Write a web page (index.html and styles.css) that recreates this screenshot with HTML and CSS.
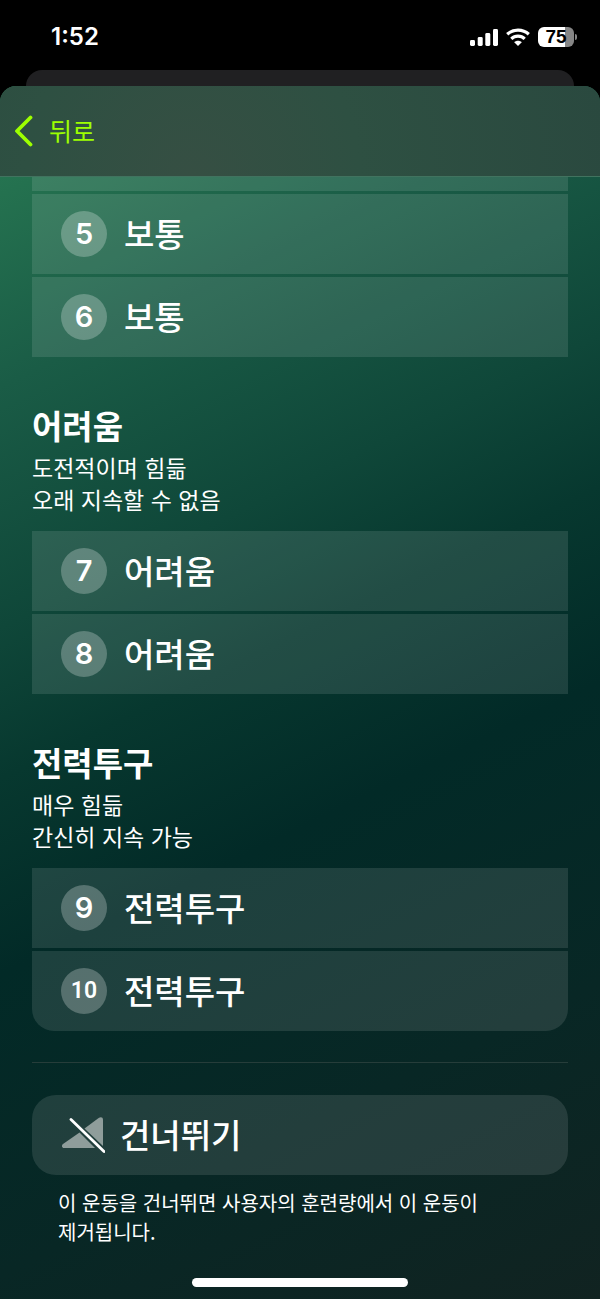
FILE: index.html
```
<!DOCTYPE html>
<html lang="ko">
<head>
  <meta charset="UTF-8">
  <meta name="viewport" content="width=device-width, initial-scale=1.0">
  <title>운동 강도</title>
  <link rel="stylesheet" href="styles.css">
</head>
<body>
  <div class="status-bar">
    <span class="time">1:52</span>
    <div class="status-icons">
      <svg class="signal" width="28" height="18" viewBox="0 0 28 18" fill="#fff">
        <rect x="0" y="12" width="5" height="6" rx="1.4"/>
        <rect x="7.7" y="9" width="5" height="9" rx="1.4"/>
        <rect x="15.3" y="5" width="5" height="13" rx="1.4"/>
        <rect x="23" y="1" width="5" height="17" rx="1.4"/>
      </svg>
      <svg class="wifi" width="24" height="18" viewBox="0 0 24 18" fill="none" stroke="#fff" stroke-width="3.2">
        <path d="M1.2 6.3C7.2.8 16.8.8 22.8 6.3"/>
        <path d="M5.3 10.8C9 7.2 15 7.2 18.7 10.8"/>
        <path d="M12 18l-3.8-3.8c2-2 5.6-2 7.6 0z" fill="#fff" stroke="none"/>
      </svg>
      <div class="battery">
        <span class="battery-level">75</span>
        <span class="battery-tip"></span>
      </div>
    </div>
  </div>

  <div class="card-behind"></div>

  <div class="sheet">
    <header class="nav">
      <button class="back">
        <svg width="20" height="32" viewBox="0 0 20 32" fill="none" stroke="#9dff00" stroke-width="3.8" stroke-linecap="round" stroke-linejoin="round">
          <path d="M16.5 2.5L3 16l13.5 13.5"/>
        </svg>
        <span class="label">뒤로</span>
      </button>
    </header>

    <main class="content">
      <div class="rows">
        <div class="row-peek"></div>
        <button class="row"><span class="badge">5</span><span class="label">보통</span></button>
        <button class="row"><span class="badge">6</span><span class="label">보통</span></button>
      </div>

      <section>
        <h2>어려움</h2>
        <p class="desc">도전적이며 힘듦<br>오래 지속할 수 없음</p>
        <div class="rows">
          <button class="row"><span class="badge">7</span><span class="label">어려움</span></button>
          <button class="row"><span class="badge">8</span><span class="label">어려움</span></button>
        </div>
      </section>

      <section>
        <h2>전력투구</h2>
        <p class="desc">매우 힘듦<br>간신히 지속 가능</p>
        <div class="rows">
          <button class="row"><span class="badge">9</span><span class="label">전력투구</span></button>
          <button class="row row-last"><span class="badge badge-small">10</span><span class="label">전력투구</span></button>
        </div>
      </section>

      <hr>

      <button class="row skip">
        <svg width="44" height="38" viewBox="0 0 44 38">
          <path d="M18.5 16.5L2 28C.3 29.3.7 32 3 32H34z" fill="#8f9d9b"/>
          <path d="M23.5 12.5L38 1.8C39.8.5 42 1.2 42 3.6V30z" fill="#8f9d9b"/>
          <path d="M10 3.5L43 35.5" stroke="#fff" stroke-width="2.8" stroke-linecap="round"/>
        </svg>
        <span class="label">건너뛰기</span>
      </button>
      <p class="note">이 운동을 건너뛰면 사용자의 훈련량에서 이 운동이 제거됩니다.</p>
    </main>

    <div class="home-indicator"></div>
  </div>
</body>
</html>
```
FILE: styles.css
```
* {
  margin: 0;
  padding: 0;
  box-sizing: border-box;
}
body {
  min-height: 100vh;
  display: flex;
  flex-direction: column;
  background: #000;
  color: #fff;
  font-family: "Noto Sans CJK KR", sans-serif;
}
button {
  border: none;
  background: none;
  color: inherit;
  font-family: inherit;
  cursor: pointer;
}

/* Status bar */
.status-bar {
  height: 70px;
  padding: 0 23px 0 51px;
  display: flex;
  align-items: flex-start;
  justify-content: space-between;
}
.time {
  margin-top: 22px;
  font-family: Inter, sans-serif;
  font-size: 24px;
  font-weight: 600;
  line-height: 30px;
}
.status-icons {
  margin-top: 27px;
  display: flex;
  align-items: center;
  gap: 8px;
}
.battery {
  display: flex;
  align-items: center;
  gap: 1px;
}
.battery-level {
  width: 36px;
  height: 20px;
  border-radius: 6px;
  background: linear-gradient(90deg, #fff 76%, #868686 76%);
  color: #000;
  font-family: "Liberation Sans", sans-serif;
  font-size: 19px;
  font-weight: 700;
  line-height: 20px;
  text-align: center;
}
.battery-tip {
  width: 2px;
  height: 6px;
  border-radius: 0 2px 2px 0;
  background: #868686;
}

/* Sheets */
.card-behind {
  height: 16px;
  margin: 0 26px;
  border-radius: 16px 16px 0 0;
  background: #202022;
}
.sheet {
  flex: 1;
  display: flex;
  flex-direction: column;
  border-radius: 16px 16px 0 0;
  overflow: hidden;
  background: linear-gradient(154deg, #257350 6%, #1a5c46 20%, #0f4739 36%, #07382f 46%, #022a27 59%, #082725 79%, #112321 100%);
}
.nav {
  height: 91px;
  padding-left: 14px;
  display: flex;
  align-items: center;
  border-bottom: 1px solid #41735f;
  background: radial-gradient(circle at 32% 100%, #364f43, #2e5042 40%, #2a493f);
}
.back {
  display: flex;
  align-items: center;
  gap: 15px;
  color: #9dff00;
  font-size: 25px;
  line-height: 36px;
}
.label {
  padding-bottom: 2px;
}

/* Intensity list */
.content {
  padding: 0 32px;
}
.rows {
  display: flex;
  flex-direction: column;
  gap: 3px;
}
.row-peek {
  height: 14px;
  background: rgba(255, 255, 255, 0.11);
}
.row {
  width: 100%;
  height: 80px;
  padding-left: 29px;
  display: flex;
  align-items: center;
  gap: 17px;
  background: rgba(255, 255, 255, 0.11);
  font-size: 33px;
  font-weight: 500;
  text-align: left;
}
.row-last {
  border-radius: 0 0 22px 22px;
}
.badge {
  width: 46px;
  height: 46px;
  border-radius: 50%;
  background: rgba(255, 255, 255, 0.25);
  font-family: Inter, sans-serif;
  font-size: 29px;
  font-weight: 600;
  line-height: 46px;
  text-align: center;
}
.badge-small {
  font-family: Roboto, sans-serif;
  font-size: 23px;
}
h2 {
  margin-top: 46px;
  font-size: 33px;
  font-weight: 700;
  line-height: 44px;
}
.desc {
  margin: 4px 0 16px;
  font-size: 23px;
  font-weight: 400;
  line-height: 32px;
}
hr {
  height: 1px;
  margin: 31px 0 32px;
  border: none;
  background: #263d3a;
}
.skip {
  border-radius: 24px;
  gap: 15px;
}
.note {
  max-width: 480px;
  padding: 13px 26px 0;
  font-size: 20px;
  line-height: 29px;
}
.home-indicator {
  width: 36%;
  height: 9px;
  margin: auto auto 12px;
  border-radius: 5px;
  background: #fff;
}
```
